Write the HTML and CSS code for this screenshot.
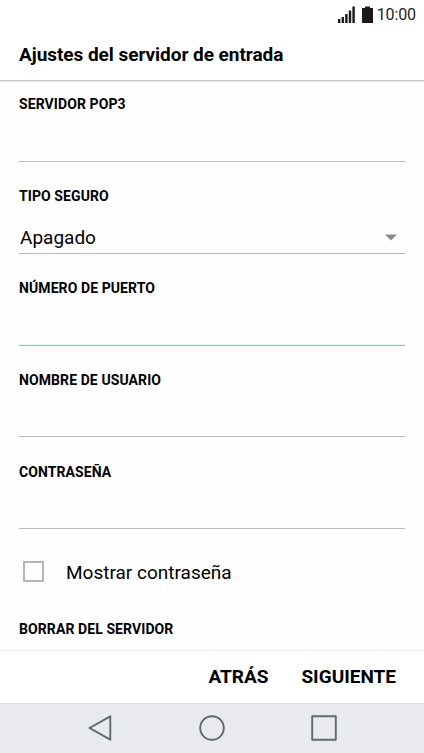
FILE: index.html
```
<!DOCTYPE html>
<html lang="es">
<head>
    <meta charset="UTF-8" />
    <title>Ajustes del servidor de entrada</title>
    <link rel="stylesheet" href="styles.css">
</head>
<body>
    <div class="phone">
        <div class="status">
            <svg class="signal" width="17" height="17" viewBox="0 0 17 17">
                <path d="M0 13h2.4v4H0zM3.6 11H6v6H3.6zM7.2 8h2.4v9H7.2zM10.8 4.500h2.400v12.500h-2.400zM14.400 0.500h2.400V17h-2.400z" />
            </svg>
            <svg class="battery" width="11" height="17" viewBox="0 0 11 17">
                <path d="M3 0.500h5V2h3v15H0V2h3z" />
            </svg>
            <span class="time">10:00</span>
        </div>
        <h1 class="title">Ajustes del servidor de entrada</h1>
        <div class="form">
            <div class="field first">
                <label>SERVIDOR POP3</label>
            </div>
            <div class="field">
                <label>TIPO SEGURO</label>
                <div class="select">
                    <span>Apagado</span>
                    <svg width="12" height="7" viewBox="0 0 12 7"><path d="M0 0.500h12L6 6.500z" /></svg>
                </div>
            </div>
            <div class="field active">
                <label>NÚMERO DE PUERTO</label>
            </div>
            <div class="field short">
                <label>NOMBRE DE USUARIO</label>
            </div>
            <div class="field last">
                <label>CONTRASEÑA</label>
            </div>
            <div class="check">
                <i class="square"></i>
                <span>Mostrar contraseña</span>
            </div>
            <div class="section">BORRAR DEL SERVIDOR</div>
        </div>
        <div class="actions">
            <span class="back">ATRÁS</span>
            <span class="next">SIGUIENTE</span>
        </div>
        <div class="nav">
            <svg width="26" height="28" viewBox="0 0 26 28"><path d="M23.300 2.300v23.400L2.500 14z" /></svg>
            <svg width="26" height="28" viewBox="0 0 26 28"><circle cx="13" cy="14" r="11.800" /></svg>
            <svg width="26" height="28" viewBox="0 0 26 28"><path d="M1.200 2.200h23.600v23.600H1.200z" /></svg>
        </div>
    </div>
</body>
</html>
```
FILE: styles.css
```
* {
    margin: 0;
    padding: 0;
    box-sizing: border-box;
}
body {
    font-family: Roboto, "Liberation Sans", sans-serif;
    color: #000;
    background-color: #fff;
}
.phone {
    width: 424px;
    height: 753px;
    display: flex;
    flex-direction: column;
    overflow: hidden;
}
.status {
    height: 30px;
    padding-right: 8px;
    display: flex;
    justify-content: flex-end;
    align-items: center;
}
.status svg {
    margin-bottom: 2px;
    fill: #1a1a1a;
}
.status .signal {
    margin-right: 7px;
}
.status .battery {
    margin-right: 4px;
}
.status .time {
    font-size: 16px;
    line-height: 30px;
    letter-spacing: -0.1px;
    color: #222;
}
.title {
    height: 51px;
    padding-left: 19px;
    font-size: 19px;
    font-weight: 700;
    line-height: 50px;
    letter-spacing: -0.04px;
    border-bottom: 1px solid #c8c8c8;
    box-shadow: 0 1px 1px #e8e8e8;
    position: relative;
}
.form {
    flex: 1;
    padding: 0 19px;
    background-color: #fefefe;
    overflow: hidden;
}
.field {
    height: 92px;
    padding-top: 24px;
    border-bottom: 1px solid #b9b9b9;
}
.field.first {
    height: 81px;
    padding-top: 13px;
}
.field.short {
    height: 91px;
}
.field.last {
    padding-top: 25px;
}
.field.active {
    border-bottom-color: #6cd3c1;
    box-shadow: inset 0 -1px #d9fbf4;
}
.field label,
.section {
    display: block;
    font-size: 14px;
    font-weight: 700;
    line-height: 20px;
    letter-spacing: 0.09px;
}
.select {
    height: 47px;
    padding: 16px 8px 0 1px;
    display: flex;
    justify-content: space-between;
    align-items: center;
    font-size: 19px;
}
.select svg {
    fill: #8c8c8c;
}
.check {
    height: 90px;
    padding: 0 0 4px 4px;
    display: flex;
    align-items: center;
    font-size: 19px;
}
.check .square {
    width: 21px;
    height: 21px;
    margin: 0 22px 1px 0;
    border: 2px solid #b5b5b5;
}
.actions {
    height: 53px;
    padding: 0 28px 2px 0;
    display: flex;
    justify-content: flex-end;
    align-items: center;
    font-size: 19px;
    font-weight: 700;
    border-top: 1px solid #ededed;
}
.actions .back {
    margin-right: 33px;
}
.nav {
    height: 50px;
    padding: 0 87px 2px;
    display: flex;
    justify-content: space-between;
    align-items: center;
    background-color: #e8eaee;
    border-top: 1px solid #dcdee0;
}
.nav svg {
    fill: none;
    stroke: #5d6970;
    stroke-width: 1.900;
    stroke-linejoin: round;
}
```
